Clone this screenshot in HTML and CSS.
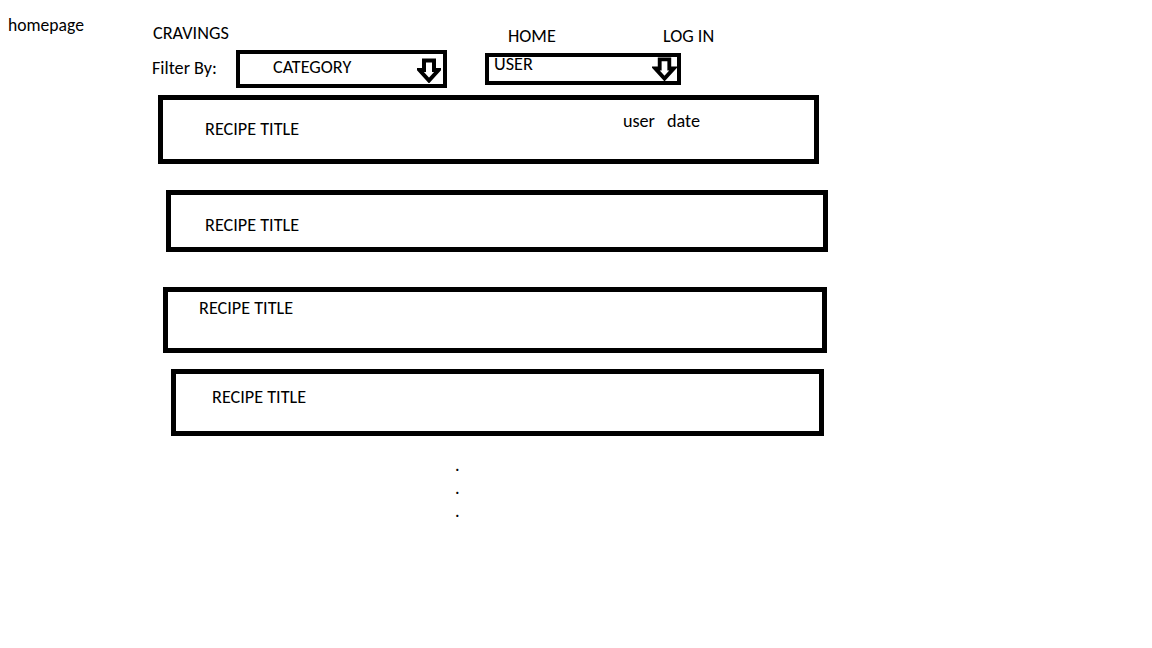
FILE: index.html
```html
<!DOCTYPE html>
<html lang="en">
<head>
<meta charset="utf-8">
<title>homepage</title>
<link rel="stylesheet" href="styles.css">
</head>
<body>
<div class="page">
  <div class="side">homepage</div>
  <div class="main">
    <header class="top">
      <div class="col-left">
        <div class="brand">CRAVINGS</div>
        <div class="filter-row">
          <span class="filter-label">Filter By:</span>
          <div class="select select-cat">
            <span class="select-text">CATEGORY</span>
            <svg class="arrow" viewBox="0 0 24 25" width="24" height="25" aria-hidden="true">
              <path d="M7 2.5 H17 V12 H21.5 L12 22.5 L2.5 12 H7 Z" fill="#fff" stroke="#000" stroke-width="4" stroke-linejoin="miter"/>
            </svg>
          </div>
        </div>
      </div>
      <div class="col-right">
        <nav class="nav">
          <span class="nav-home">HOME</span>
          <span class="nav-login">LOG IN</span>
        </nav>
        <div class="select select-user">
          <span class="select-text">USER</span>
          <svg class="arrow" viewBox="0 0 24 25" width="25" height="24" aria-hidden="true">
            <path d="M7 2.5 H17 V12 H21.5 L12 22.5 L2.5 12 H7 Z" fill="#fff" stroke="#000" stroke-width="4" stroke-linejoin="miter"/>
          </svg>
        </div>
      </div>
    </header>

    <div class="list">
      <div class="card card-1">
        <span class="title">RECIPE TITLE</span>
        <span class="meta"><span>user</span><span>date</span></span>
      </div>
      <div class="card card-2">
        <span class="title">RECIPE TITLE</span>
      </div>
      <div class="card card-3">
        <span class="title">RECIPE TITLE</span>
      </div>
      <div class="card card-4">
        <span class="title">RECIPE TITLE</span>
      </div>
    </div>

    <div class="dots">
      <div>.</div>
      <div>.</div>
      <div>.</div>
    </div>
  </div>
</div>
</body>
</html>
```

FILE: styles.css
```css
* {
  box-sizing: border-box;
}

html, body {
  margin: 0;
  padding: 0;
  background: #fff;
}

body {
  font-family: Carlito, Lato, "Liberation Sans", sans-serif;
  font-size: 18.2px;
  line-height: 20px;
  color: #000;
  width: 1152px;
  height: 648px;
  overflow: hidden;
}

.page {
  display: flex;
  align-items: flex-start;
}

.side {
  width: 152px;
  padding: 15px 0 0 8px;
  font-size: 17.6px;
}

.main {
  display: flex;
  flex-direction: column;
}

.top {
  display: flex;
  align-items: flex-start;
}

.col-left {
  display: flex;
  flex-direction: column;
  padding-top: 23px;
  width: 295px;
}

.brand {
  margin-left: 1px;
}

.filter-row {
  display: flex;
  align-items: center;
  margin-top: 7px;
}

.filter-label {
  width: 84px;
  margin-top: -3px;
}

.select {
  display: flex;
  border: 4px solid #000;
  background: #fff;
}

.select-cat {
  width: 211px;
  height: 38px;
  align-items: center;
  padding-left: 33px;
  padding-right: 2px;
}

.select-cat .select-text {
  margin-top: -4px;
}

.select-cat .arrow {
  margin-left: auto;
  margin-top: 3px;
}

.col-right {
  display: flex;
  flex-direction: column;
  margin-left: 38px;
  padding-top: 26px;
}

.nav {
  display: flex;
  padding-left: 23px;
}

.nav-home {
  width: 155px;
}

.select-user {
  width: 196px;
  height: 32px;
  margin-top: 7px;
  align-items: flex-start;
  padding-left: 5px;
}

.select-user .select-text {
  margin-top: -3px;
}

.select-user .arrow {
  margin-left: auto;
  margin-top: 0;
}

.list {
  display: flex;
  flex-direction: column;
  margin-top: 7px;
}

.card {
  display: flex;
  align-items: flex-start;
  border: 5px solid #000;
}

.card-1 {
  margin-left: 6px;
  width: 661px;
  height: 69px;
  padding-left: 42px;
  padding-right: 114px;
}

.card-1 .title {
  margin-top: 19px;
}

.card-1 .meta {
  margin-left: auto;
  margin-top: 11px;
  display: flex;
  gap: 12px;
}

.card-2 {
  margin-top: 26px;
  margin-left: 14px;
  width: 662px;
  height: 62px;
  padding-left: 34px;
  padding-top: 20px;
}

.card-3 {
  margin-top: 35px;
  margin-left: 11px;
  width: 664px;
  height: 66px;
  padding-left: 31px;
  padding-top: 6px;
}

.card-4 {
  margin-top: 16px;
  margin-left: 19px;
  width: 653px;
  height: 67px;
  padding-left: 36px;
  padding-top: 13px;
}

.dots {
  margin-top: 18px;
  margin-left: 303px;
  line-height: 23px;
}
```
